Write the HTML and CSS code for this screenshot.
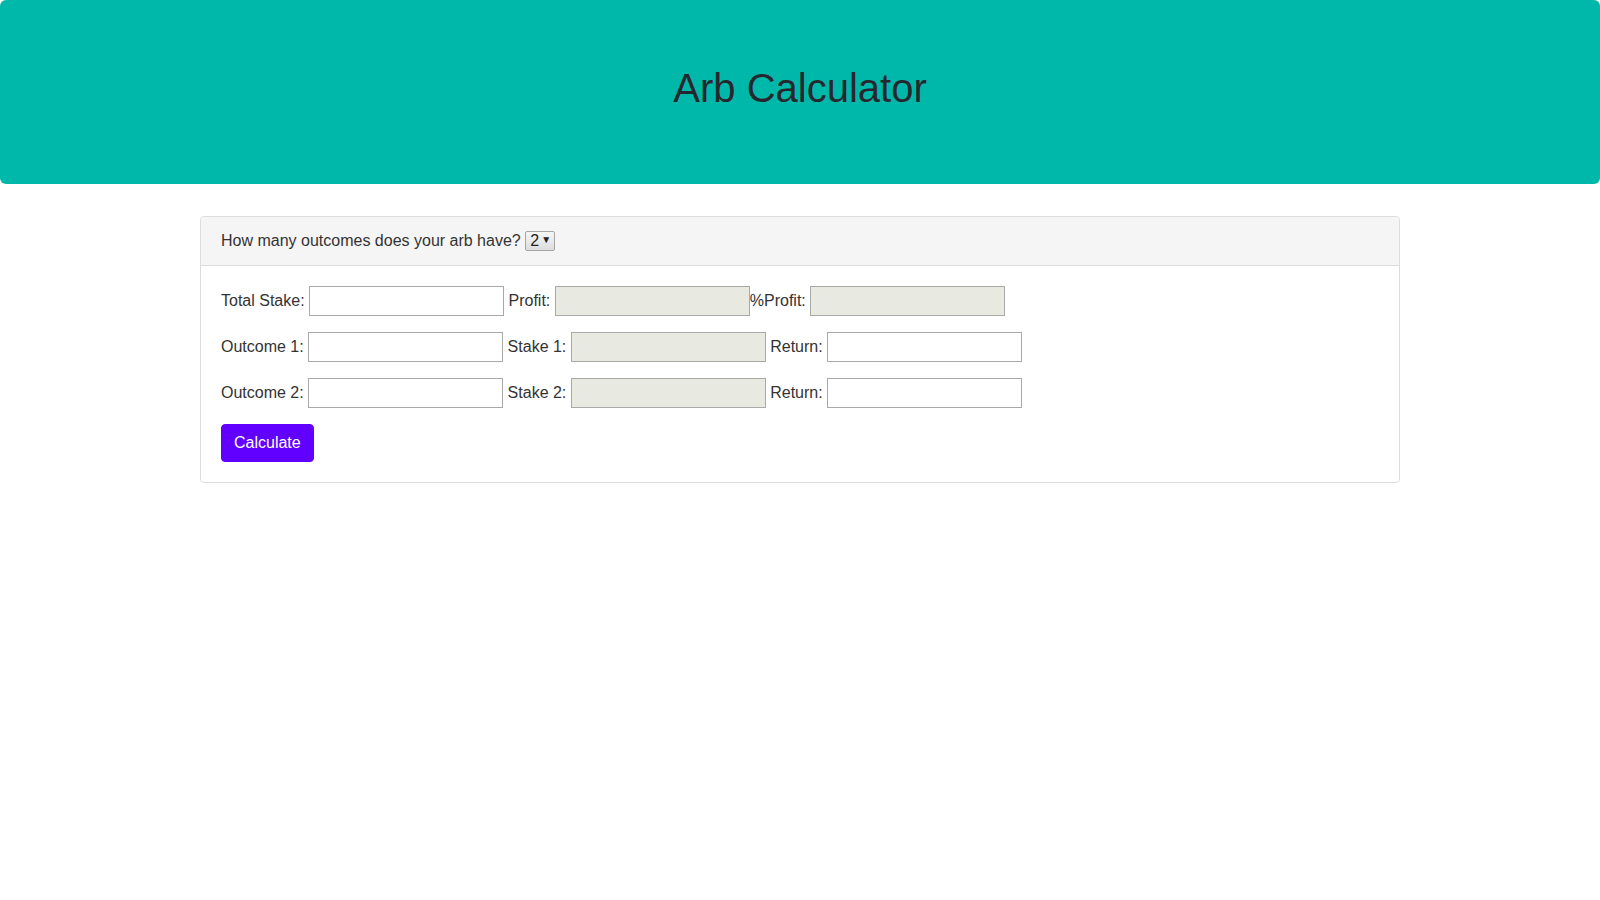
FILE: index.html
```html
<!DOCTYPE html>
<html lang="en">
<head>
<meta charset="utf-8">
<title>Arb Calculator</title>
<link rel="stylesheet" href="styles.css">
</head>
<body>
<header class="jumbo">
  <h1 class="title">Arb Calculator</h1>
</header>
<main class="container">
  <section class="panel">
    <div class="panel-heading">
      <label for="outcomes">How many outcomes does your arb have?</label>
      <span class="select-wrap"><select id="outcomes" class="select"><option>2</option><option>3</option></select><span class="select-arrow">▼</span></span>
    </div>
    <div class="panel-body">
      <div class="row">
        <label>Total Stake:</label> <input class="field" type="text"> <label>Profit:</label> <input class="field ro" type="text" readonly><label>%Profit:</label> <input class="field ro" type="text" readonly>
      </div>
      <div class="row">
        <label>Outcome 1:</label> <input class="field" type="text"> <label>Stake 1:</label> <input class="field ro" type="text" readonly> <label>Return:</label> <input class="field" type="text">
      </div>
      <div class="row">
        <label>Outcome 2:</label> <input class="field" type="text"> <label>Stake 2:</label> <input class="field ro" type="text" readonly> <label>Return:</label> <input class="field" type="text">
      </div>
      <button class="btn" type="button">Calculate</button>
    </div>
  </section>
</main>
</body>
</html>
```
FILE: styles.css
```css
html, body {
  margin: 0;
  padding: 0;
  background: #ffffff;
}
body {
  font-family: "Liberation Sans", Arial, Helvetica, sans-serif;
  font-size: 16px;
  line-height: 1.5;
  color: #333333;
}
.jumbo {
  background: #00b8aa;
  border-radius: 6px;
  padding: 66px 0 74px;
  text-align: center;
}
.title {
  margin: 0;
  font-size: 40px;
  line-height: 44px;
  font-weight: 400;
  color: #25272e;
}
.container {
  width: 1200px;
  margin: 32px auto 0;
}
.panel {
  border: 1px solid #dddddd;
  border-radius: 4px;
  background: #ffffff;
}
.panel-heading {
  background: #f5f5f5;
  border-bottom: 1px solid #dddddd;
  border-radius: 3px 3px 0 0;
  padding: 12px 20px;
  height: 24px;
  line-height: 24px;
}
.select-wrap {
  position: relative;
  display: inline-block;
  vertical-align: top;
  margin-top: 2px;
}
.select {
  -webkit-appearance: none;
  appearance: none;
  box-sizing: border-box;
  width: 30px;
  height: 20px;
  margin: 0;
  padding: 0 12px 0 4px;
  font-family: inherit;
  font-size: 16px;
  line-height: 18px;
  color: #222222;
  border: 1px solid #a6a6a6;
  border-radius: 2px;
  background: linear-gradient(#f6f6f6, #dddddd);
  display: block;
}
.select-arrow {
  position: absolute;
  right: 4px;
  top: -1px;
  font-size: 10px;
  line-height: 20px;
  color: #222222;
  pointer-events: none;
}
.panel-body {
  padding: 20px;
}
.row {
  height: 30px;
  line-height: 30px;
  margin-bottom: 16px;
  white-space: nowrap;
}
.row label {
  vertical-align: top;
}
.field {
  box-sizing: border-box;
  width: 195px;
  height: 30px;
  margin: 0;
  padding: 1px 3px;
  border: 1px solid #a9a9a9;
  border-radius: 0;
  background: #ffffff;
  font-family: inherit;
  font-size: 16px;
  vertical-align: top;
}
.field.ro {
  background: #e8eae2;
}
.btn {
  display: block;
  box-sizing: border-box;
  height: 38px;
  padding: 6px 12px;
  border: 1px solid #6200ff;
  border-radius: 4px;
  background: #6200ff;
  color: #ffffff;
  font-family: inherit;
  font-size: 16px;
  line-height: 24px;
  cursor: pointer;
}
```
